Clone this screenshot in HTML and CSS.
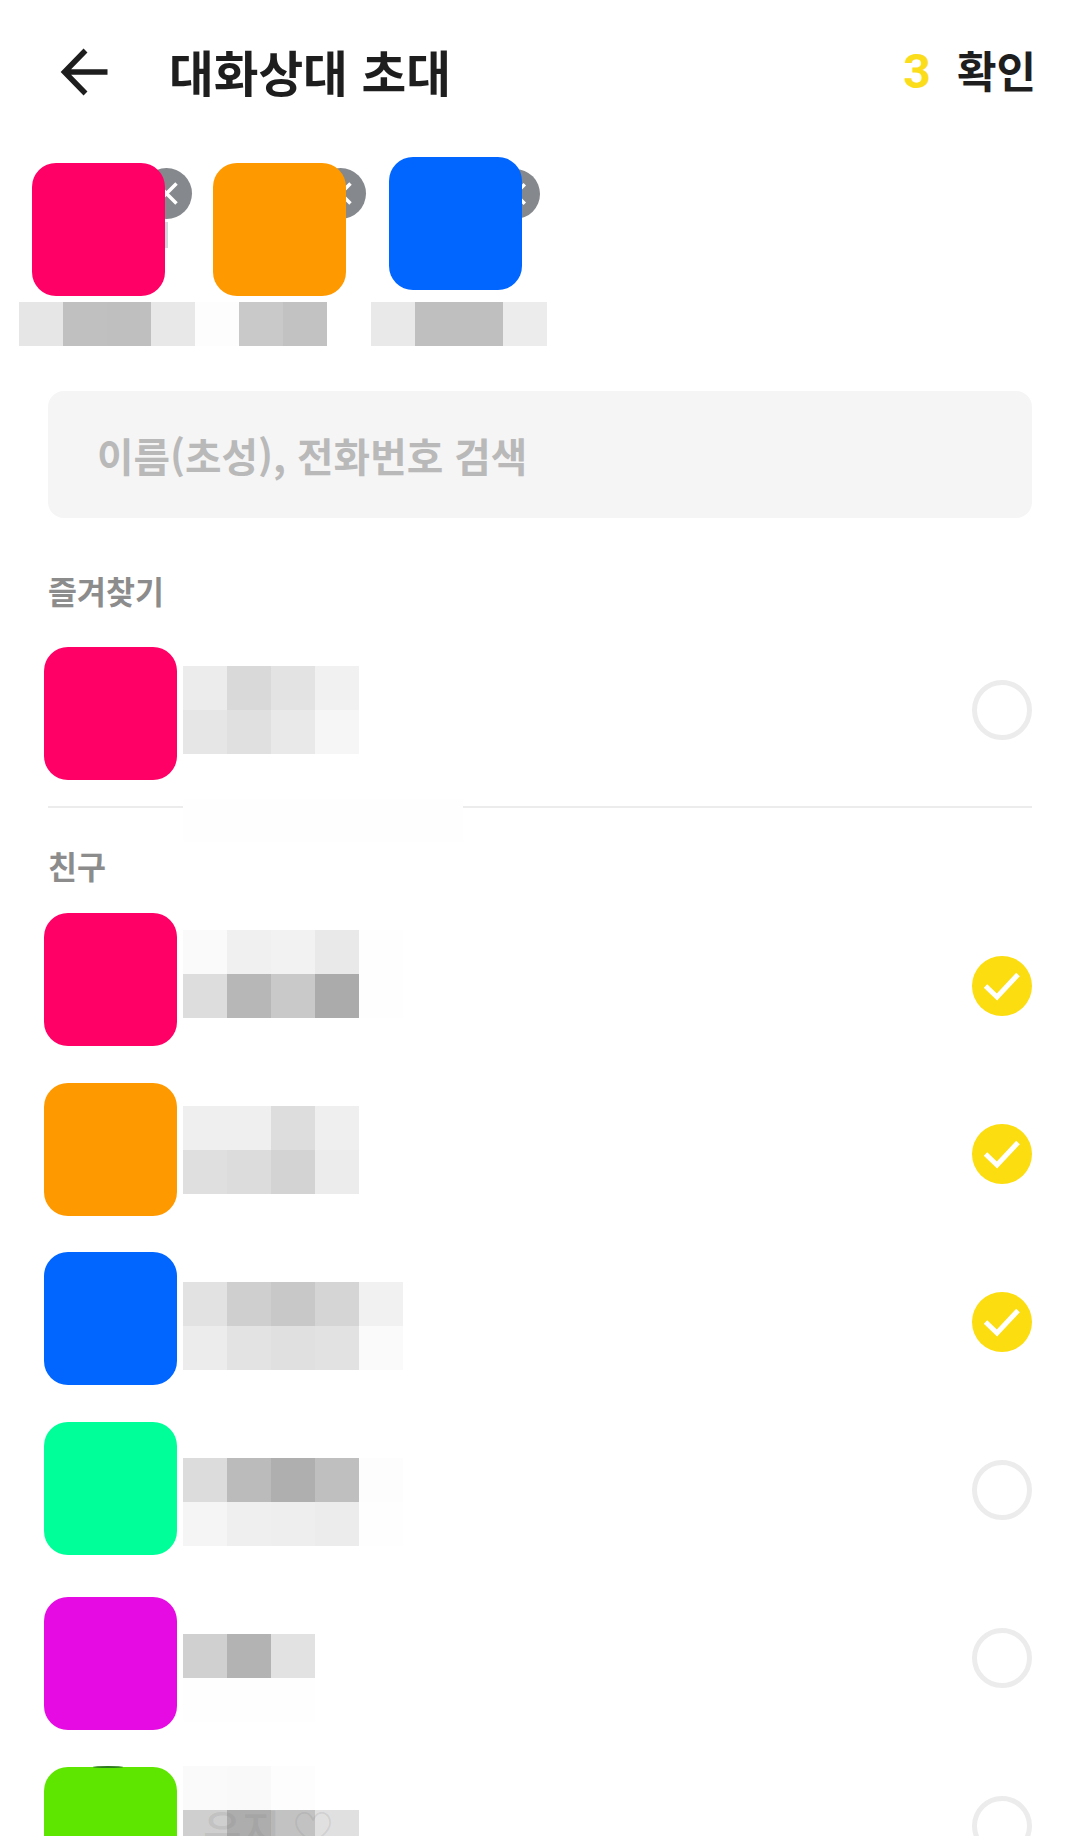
FILE: index.html
```html
<!DOCTYPE html>
<html lang="ko">
<head>
<meta charset="utf-8">
<title>대화상대 초대</title>
<link rel="stylesheet" href="styles.css">
</head>
<body>
<div class="page">
  <header class="topbar">
    <svg class="back" viewBox="0 0 49 48" aria-hidden="true"><path d="M47.500 24H5M25.500 2.500 4.500 24 25.500 45.500"/></svg>
    <h1 class="title">대화상대 초대</h1>
    <span class="count">3</span>
    <span class="confirm">확인</span>
  </header>

  <section class="chips">
    <div class="chip chip-a">
      <i class="sliver"></i>
      <span class="remove"><svg viewBox="0 0 51 51"><path d="M15.500 15.500 35.500 35.500M35.500 15.500 15.500 35.500"/></svg></span>
      <div class="avatar pink"></div>
      <div class="mosaic"><div class="mrow"><i class="g-e6"></i><i class="g-c0"></i><i class="g-bf"></i><i class="g-e8"></i></div></div>
    </div>
    <div class="chip chip-b">
      <span class="remove"><svg viewBox="0 0 51 51"><path d="M15.500 15.500 35.500 35.500M35.500 15.500 15.500 35.500"/></svg></span>
      <div class="avatar orange"></div>
      <div class="mosaic"><div class="mrow"><i class="g-fd"></i><i class="g-c9"></i><i class="g-c2"></i></div></div>
    </div>
    <div class="chip chip-c">
      <span class="remove"><svg viewBox="0 0 51 51"><path d="M15.500 15.500 35.500 35.500M35.500 15.500 15.500 35.500"/></svg></span>
      <div class="avatar blue"></div>
      <div class="mosaic"><div class="mrow"><i class="g-e9"></i><i class="g-bf"></i><i class="g-bf"></i><i class="g-ec"></i></div></div>
    </div>
  </section>

  <div class="search">이름(초성), 전화번호 검색</div>

  <section class="favorites">
    <h2 class="label">즐겨찾기</h2>
    <div class="row row-fav">
      <div class="avatar pink"></div>
      <div class="mosaic">
        <div class="mrow"><i class="g-ec"></i><i class="g-d9"></i><i class="g-e3"></i><i class="g-f1"></i></div>
        <div class="mrow"><i class="g-e6"></i><i class="g-e0"></i><i class="g-e9"></i><i class="g-f6"></i></div>
      </div>
      <span class="check"></span>
    </div>
    <div class="divider"><i class="patch"></i></div>
  </section>

  <section class="friends">
    <h2 class="label">친구</h2>
    <div class="row row-1">
      <div class="avatar pink"></div>
      <div class="mosaic">
        <div class="mrow"><i class="g-fa"></i><i class="g-f0"></i><i class="g-f2"></i><i class="g-e9"></i><i class="g-fe"></i></div>
        <div class="mrow"><i class="g-dd"></i><i class="g-b7"></i><i class="g-c9"></i><i class="g-ab"></i><i class="g-fe"></i></div>
      </div>
      <span class="check on"><svg viewBox="0 0 60 60"><path d="M13.500 30 25 41 46 18.500"/></svg></span>
    </div>
    <div class="row row-2">
      <div class="avatar orange"></div>
      <div class="mosaic">
        <div class="mrow"><i class="g-ef"></i><i class="g-ef"></i><i class="g-dd"></i><i class="g-ef"></i></div>
        <div class="mrow"><i class="g-df"></i><i class="g-dc"></i><i class="g-d3"></i><i class="g-ec"></i></div>
      </div>
      <span class="check on"><svg viewBox="0 0 60 60"><path d="M13.500 30 25 41 46 18.500"/></svg></span>
    </div>
    <div class="row row-3">
      <div class="avatar blue"></div>
      <div class="mosaic">
        <div class="mrow"><i class="g-e2"></i><i class="g-cf"></i><i class="g-c8"></i><i class="g-d5"></i><i class="g-f1"></i></div>
        <div class="mrow"><i class="g-ec"></i><i class="g-e3"></i><i class="g-e0"></i><i class="g-e2"></i><i class="g-fa"></i></div>
      </div>
      <span class="check on"><svg viewBox="0 0 60 60"><path d="M13.500 30 25 41 46 18.500"/></svg></span>
    </div>
    <div class="row row-4">
      <div class="avatar mint"></div>
      <div class="mosaic">
        <div class="mrow"><i class="g-dc"></i><i class="g-bb"></i><i class="g-af"></i><i class="g-bf"></i><i class="g-fd"></i></div>
        <div class="mrow"><i class="g-f5"></i><i class="g-ef"></i><i class="g-ee"></i><i class="g-ec"></i><i class="g-fe"></i></div>
      </div>
      <span class="check"></span>
    </div>
    <div class="row row-5">
      <div class="avatar magenta"></div>
      <div class="mosaic">
        <div class="mrow"><i class="g-d0"></i><i class="g-b3"></i><i class="g-e2"></i></div>
        <div class="mrow"><i class="g-fe"></i><i class="g-fe"></i><i class="g-fe"></i></div>
      </div>
      <span class="check"></span>
    </div>
    <div class="row row-6">
      <div class="avatar lime"></div>
      <div class="mosaic">
        <div class="mrow"><i class="g-fa"></i><i class="g-f9"></i><i class="g-fd"></i></div>
        <div class="mrow"><i class="g-cf"></i><i class="g-ad"></i><i class="g-c2"></i><i class="g-e0"></i></div>
        <span class="ghost">우지 ♡</span>
      </div>
      <span class="check"></span>
    </div>
  </section>
</div>
</body>
</html>
```

FILE: styles.css
```css
* { box-sizing: border-box; }

html, body { margin: 0; padding: 0; background: #fff; }

body { font-family: "Noto Sans CJK KR", "Noto Sans", sans-serif; }

.page { width: 1080px; height: 1836px; overflow: hidden; }

/* Top bar */
.topbar { display: flex; align-items: center; height: 144px; padding: 0 44px 0 60px; color: #1e1e1e; }
.back { width: 49px; height: 48px; flex: none; }
.back path { fill: none; stroke: #1e1e1e; stroke-width: 5.5; }
.title { margin: -2px 0 0 60px; font-size: 48.600px; font-weight: 700; line-height: 60px; }
.count { margin-left: auto; font-family: Roboto, sans-serif; font-size: 48px; font-weight: 700; line-height: 60px; color: #fbdd1c; }
.confirm { margin: -6px 0 0 26px; font-size: 43px; font-weight: 700; line-height: 60px; }

/* Selected people */
.chips { display: flex; padding: 19px 0 0 19px; }
.chip { position: relative; width: 176px; }
.chip .avatar { position: relative; z-index: 1; }
.chip-a .avatar { margin-left: 13px; }
.chip-b .avatar,
.chip-c .avatar { margin-left: 18px; }
.chip-c .avatar { margin-top: -6px; }
.chip .mosaic { margin-top: 6px; }
.chip-c .mosaic { margin-top: 12px; }

.remove { position: absolute; top: 5px; width: 51px; height: 51px; border-radius: 50%; background: #85888c; }
.remove svg { display: block; width: 100%; height: 100%; }
.remove path { fill: none; stroke: #fff; stroke-width: 3.5; }
.chip-a .remove { left: 122px; }
.chip-b .remove { left: 120px; }
.chip-c .remove { left: 119px; top: 6px; width: 50px; height: 50px; }

.sliver { position: absolute; left: 146px; top: 59px; width: 3px; height: 26px; background: #cfd9dc; }

/* Search */
.search { height: 127px; margin: 45px 48px 0; padding-left: 49px; border-radius: 16px; background: #f5f5f5; font-size: 39.700px; font-weight: 700; line-height: 127px; color: #b9b9b9; }

/* Section labels */
.label { height: 44px; margin: 0; font-size: 31.500px; font-weight: 700; line-height: 44px; color: #8c8c8c; padding-left: 48px; }
.favorites { position: relative; margin-top: 50px; }
.favorites .row { margin-top: 35px; }
.friends { margin-top: 35px; }
.friends .row-1 { margin-top: 26px; }

/* Rows */
.row { display: flex; align-items: flex-start; height: 133px; padding: 0 48px 0 44px; }
.row .mosaic { position: relative; margin: var(--name-top) 0 0 6px; }
.row .check { margin-top: var(--check-top); margin-left: auto; }
.row-fav { --name-top: 19px; --check-top: 33px; }
.row-1 { --name-top: 17px; --check-top: 43px; margin-bottom: 37px; }
.row-2 { --name-top: 23px; --check-top: 41px; margin-bottom: 36px; }
.row-3 { --name-top: 30px; --check-top: 40px; margin-bottom: 37px; }
.row-4 { --name-top: 36px; --check-top: 38px; margin-bottom: 42px; }
.row-5 { --name-top: 37px; --check-top: 31px; margin-bottom: 37px; }
.row-6 { --name-top: -1px; --check-top: 29px; }

.avatar { position: relative; flex: none; width: 133px; height: 133px; border-radius: 24px; }
.pink { background: #ff0066; }
.orange { background: #ff9900; }
.blue { background: #0066ff; }
.mint { background: #00ff99; }
.magenta { background: #e60be2; }
.lime { background: #5fe600; }
.lime::before { content: ""; position: absolute; left: 49px; top: -1px; width: 30px; height: 2px; border-radius: 50%; background: #2c7a1c; }

.check { flex: none; width: 60px; height: 60px; border: 5px solid #ececec; border-radius: 50%; }
.check.on { border: 0; background: #fbdd10; }
.check svg { display: block; width: 60px; height: 60px; }
.check path { fill: none; stroke: #fff; stroke-width: 5; }

.divider { position: relative; height: 2px; margin: 26px 48px 0; background: #ececec; }
.patch { position: absolute; left: 135px; top: -7px; width: 280px; height: 43px; background: #fefefe; }

/* Pixelated privacy cells */
.mosaic { flex: none; }
.mrow { display: flex; }
.mrow i { display: block; width: 44px; height: 44px; flex: none; }
.ghost { position: absolute; left: 20px; top: 32px; font-size: 42px; font-weight: 500; line-height: 60px; white-space: nowrap; color: rgba(110, 110, 110, 0.14); }

.g-ab { background: #ababab; }
.g-ad { background: #adadad; }
.g-af { background: #afafaf; }
.g-b3 { background: #b3b3b3; }
.g-b7 { background: #b7b7b7; }
.g-bb { background: #bbbbbb; }
.g-bf { background: #bfbfbf; }
.g-c0 { background: #c0c0c0; }
.g-c2 { background: #c2c2c2; }
.g-c8 { background: #c8c8c8; }
.g-c9 { background: #c9c9c9; }
.g-cf { background: #cfcfcf; }
.g-d0 { background: #d0d0d0; }
.g-d3 { background: #d3d3d3; }
.g-d5 { background: #d5d5d5; }
.g-d9 { background: #d9d9d9; }
.g-dc { background: #dcdcdc; }
.g-dd { background: #dddddd; }
.g-df { background: #dfdfdf; }
.g-e0 { background: #e0e0e0; }
.g-e2 { background: #e2e2e2; }
.g-e3 { background: #e3e3e3; }
.g-e6 { background: #e6e6e6; }
.g-e8 { background: #e8e8e8; }
.g-e9 { background: #e9e9e9; }
.g-ec { background: #ececec; }
.g-ee { background: #eeeeee; }
.g-ef { background: #efefef; }
.g-f0 { background: #f0f0f0; }
.g-f1 { background: #f1f1f1; }
.g-f2 { background: #f2f2f2; }
.g-f5 { background: #f5f5f5; }
.g-f6 { background: #f6f6f6; }
.g-f9 { background: #f9f9f9; }
.g-fa { background: #fafafa; }
.g-fd { background: #fdfdfd; }
.g-fe { background: #fefefe; }
```
